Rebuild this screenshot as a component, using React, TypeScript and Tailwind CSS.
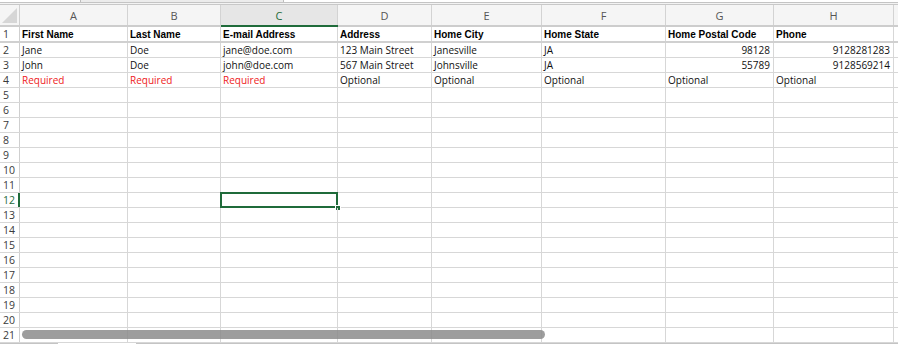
import React from 'react'

const cols = [
  { key: 'A', w: 'w-[108px]' },
  { key: 'B', w: 'w-[93px]' },
  { key: 'C', w: 'w-[117px]' },
  { key: 'D', w: 'w-[94px]' },
  { key: 'E', w: 'w-[110px]' },
  { key: 'F', w: 'w-[124px]' },
  { key: 'G', w: 'w-[108px]' },
  { key: 'H', w: 'w-[120px]' },
]

type Cell = { text: string; right?: boolean; red?: boolean }

const data: Cell[][] = [
  [
    { text: 'Jane' }, { text: 'Doe' }, { text: 'jane@doe.com' }, { text: '123 Main Street' },
    { text: 'Janesville' }, { text: 'JA' }, { text: '98128', right: true }, { text: '9128281283', right: true },
  ],
  [
    { text: 'John' }, { text: 'Doe' }, { text: 'john@doe.com' }, { text: '567 Main Street' },
    { text: 'Johnsville' }, { text: 'JA' }, { text: '55789', right: true }, { text: '9128569214', right: true },
  ],
  [
    { text: 'Required', red: true }, { text: 'Required', red: true }, { text: 'Required', red: true },
    { text: 'Optional' }, { text: 'Optional' }, { text: 'Optional' }, { text: 'Optional' }, { text: 'Optional' },
  ],
]

const headers = ['First Name', 'Last Name', 'E-mail Address', 'Address', 'Home City', 'Home State', 'Home Postal Code', 'Phone']

const dataFont = { fontFamily: '"Open Sans", "DejaVu Sans", sans-serif' }

const RowNum = ({ n, active }: { n: number; active?: boolean }) => (
  <div className={`relative w-[20px] shrink-0 border-r border-[#cfcfcf] pl-[3px] pt-[1px] text-[10.5px] leading-none flex items-center ${active ? 'text-[#1f6b3a]' : 'text-[#3a3a3a]'}`}>
    {n}
    {active && <div className="absolute right-[-1px] top-0 bottom-0 w-[2px] bg-[#1f6b3a]" />}
  </div>
)

const App = () => {
  const blankRows = Array.from({ length: 17 }, (_, i) => i + 5)

  return (
    <div className="relative w-[898px] h-[344px] overflow-hidden bg-white" style={dataFont}>
      {/* formula bar remnants */}
      <div className="flex h-[3px] border-b border-[#c4c4c4]">
        <div className="w-[81px] bg-white border-r border-[#bdbdbd]" />
        <div className="w-[202px] bg-[#ececec]" />
        <div className="flex-1 bg-white border-l border-[#bdbdbd]" />
      </div>
      <div className="h-[2px] border-b border-[#c8c8c8] bg-[#f3f3f3]" />

      {/* column headers */}
      <div className="flex h-[22px] border-b-2 border-[#cdcdcd] bg-[#f5f5f5]">
        <div className="w-[20px] shrink-0 border-r border-[#d0d0d0] relative">
          <svg className="absolute inset-0" width="19" height="20" viewBox="0 0 19 20">
            <polygon points="17,3 17,18 2,18" fill="#d6d6d6" />
          </svg>
        </div>
        {cols.map((c) => (
          <div
            key={c.key}
            className={`${c.w} shrink-0 border-r border-[#d3d3d3] flex items-center justify-center pt-[3px] text-[11px] relative ${c.key === 'C' ? 'bg-[#e6e6e6] text-[#1f6b3a]' : 'text-[#555]'}`}
          >
            {c.key}
            {c.key === 'C' && <div className="absolute left-0 right-[-1px] bottom-[-2px] h-[2px] bg-[#1f6b3a]" />}
          </div>
        ))}
        <div className="flex-1" />
      </div>

      {/* row 1 */}
      <div className="flex h-[16px] border-b-2 border-[#d0d0d0]">
        <RowNum n={1} />
        {cols.map((c, i) => (
          <div
            key={c.key}
            className={`${c.w} shrink-0 border-r border-[#d7d7d7] px-[2px] pt-[1px] flex items-center text-[10px] font-bold text-black whitespace-nowrap overflow-hidden`}
            style={{ fontFamily: '"Liberation Sans", Arial, sans-serif' }}
          >
            {headers[i]}
          </div>
        ))}
        <div className="flex-1" />
      </div>

      {/* rows 2-4 */}
      {data.map((row, r) => (
        <div key={r} className="flex h-[15px] border-b border-[#d7d7d7]">
          <RowNum n={r + 2} />
          {cols.map((c, i) => (
            <div
              key={c.key}
              className={`${c.w} shrink-0 border-r border-[#d7d7d7] px-[2px] pt-[1px] flex items-center text-[10px] whitespace-nowrap overflow-hidden ${row[i].right ? 'justify-end pr-[3px]' : ''} ${row[i].red ? 'text-[#ee2222]' : 'text-[#111]'}`}
            >
              {row[i].text}
            </div>
          ))}
          <div className="flex-1" />
        </div>
      ))}

      {/* empty rows */}
      {blankRows.map((n) => (
        <div key={n} className="flex h-[15px] border-b border-[#d7d7d7]">
          <RowNum n={n} active={n === 12} />
          {cols.map((c) => (
            <div key={c.key} className={`${c.w} shrink-0 border-r border-[#d7d7d7] relative`}>
              {n === 12 && c.key === 'C' && (
                <>
                  <div className="absolute left-[-1px] top-[-1px] right-[-1px] bottom-[-1px] border-2 border-[#1f6b3a]" />
                  <div className="absolute right-[-4px] bottom-[-4px] w-[6px] h-[6px] bg-[#1f6b3a] border border-white" />
                </>
              )}
            </div>
          ))}
          <div className="flex-1" />
        </div>
      ))}

      {/* sheet tab edge */}
      <div className="flex h-[1px]">
        <div className="w-[58px] bg-[#c4c4c4]" />
        <div className="w-[78px] bg-white" />
        <div className="flex-1 bg-[#c4c4c4]" />
      </div>

      {/* horizontal scrollbar */}
      <div className="absolute left-[22px] top-[330px] w-[523px] h-[9px] rounded-full bg-[#8c8c8c]/85" />
    </div>
  )
}

export default App
